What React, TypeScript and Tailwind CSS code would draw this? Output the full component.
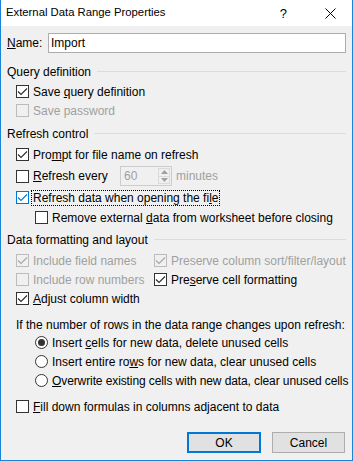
import React from 'react';

type BoxProps = {
  checked?: boolean;
  disabled?: boolean;
  focus?: boolean;
};

function Box({ checked, disabled, focus }: BoxProps) {
  const border = disabled ? 'border-[#bcbcbc]' : focus ? 'border-[#0078d7]' : 'border-[#333333]';
  const bg = disabled ? 'bg-transparent' : 'bg-white';
  const stroke = disabled ? '#a6a6a6' : focus ? '#0078d7' : '#2b2b2b';
  return (
    <span className={`w-[13px] h-[13px] border ${border} ${bg} flex items-center justify-center shrink-0`}>
      {checked && (
        <svg width="11" height="11" viewBox="0 0 11 11">
          <path d="M1 5.5 L4 8.5 L10 2.5" stroke={stroke} strokeWidth="1.1" fill="none" />
        </svg>
      )}
    </span>
  );
}

function Radio({ checked }: { checked?: boolean }) {
  return (
    <span className="w-[13px] h-[13px] rounded-full border border-[#333333] bg-white flex items-center justify-center shrink-0">
      {checked && <span className="w-[7px] h-[7px] rounded-full bg-[#333333]" />}
    </span>
  );
}

function Header({ children, className }: { children: React.ReactNode; className: string }) {
  return (
    <div className={`flex items-center h-[19px] gap-[6px] ${className}`}>
      <span>{children}</span>
      <div className="flex-1 h-px bg-[#dcdcdc]" />
    </div>
  );
}

export default function App() {
  return (
    <div className="w-[353px] h-[461px] flex flex-col border border-t-0 border-[#1883d7] font-['Liberation_Sans',Arial,sans-serif] text-[12px] text-black leading-none whitespace-nowrap">
      {/* Title bar */}
      <div className="h-[26px] bg-white flex items-center pl-[5px] shrink-0">
        <span className="text-[11.3px]">External Data Range Properties</span>
        <span className="ml-auto mr-[38px] text-[13px]">?</span>
        <svg className="mr-[16px]" width="11" height="11" viewBox="0 0 11 11">
          <path d="M0.5 0.5 L10.5 10.5 M10.5 0.5 L0.5 10.5" stroke="#000" strokeWidth="1" />
        </svg>
      </div>

      {/* Body */}
      <div className="flex-1 bg-[#f0f0f0] px-[6px] pt-[7px] flex flex-col">
        {/* Name */}
        <div className="flex items-center h-[20px]">
          <span className="w-[41px]">
            <span className="underline">N</span>ame:
          </span>
          <div className="flex-1 h-[20px] bg-white border border-[#adadad] flex items-center pl-[2px]">Import</div>
        </div>

        <Header className="mt-[9px]">Query definition</Header>
        <div className="flex items-center h-[19px] mt-[1px] ml-[9px] gap-[4px]">
          <Box checked />
          <span>
            Save <span className="underline">q</span>uery definition
          </span>
        </div>
        <div className="flex items-center h-[19px] ml-[9px] gap-[4px] text-[#a0a0a0]">
          <Box disabled />
          <span>Save password</span>
        </div>

        <Header className="mt-[4px]">Refresh control</Header>
        <div className="flex items-center h-[19px] mt-[2px] ml-[9px] gap-[4px]">
          <Box checked />
          <span>
            Pro<span className="underline">m</span>pt for file name on refresh
          </span>
        </div>
        <div className="flex items-center h-[20px] mt-[2px] ml-[9px] gap-[4px]">
          <Box />
          <span className="w-[83px]">
            <span className="underline">R</span>efresh every
          </span>
          <div className="w-[52px] h-[20px] border border-[#cccccc] flex items-stretch">
            <span className="flex-1 flex items-center pl-[3px] text-[#a0a0a0]">60</span>
            <div className="w-[12px] my-[1px] mr-[1px] flex flex-col border border-[#dadada]">
              <div className="flex-1 flex items-center justify-center border-b border-[#dadada]">
                <svg width="7" height="4" viewBox="0 0 7 4">
                  <path d="M0 4 L3.5 0 L7 4 Z" fill="#a0a0a0" />
                </svg>
              </div>
              <div className="flex-1 flex items-center justify-center">
                <svg width="7" height="4" viewBox="0 0 7 4">
                  <path d="M0 0 L3.5 4 L7 0 Z" fill="#a0a0a0" />
                </svg>
              </div>
            </div>
          </div>
          <span className="text-[#a0a0a0]">minutes</span>
        </div>
        <div className="flex items-center h-[19px] mt-[2px] ml-[9px] gap-[2px]">
          <Box checked focus />
          <span className="h-[16px] flex items-center border border-dotted border-black px-[1px]">
            Refresh data when opening the fi<span className="underline">l</span>e
          </span>
        </div>
        <div className="flex items-center h-[19px] mt-[1px] ml-[28px] gap-[4px]">
          <Box />
          <span>
            Remove external <span className="underline">d</span>ata from worksheet before closing
          </span>
        </div>

        <Header className="mt-[3px]">Data formatting and layout</Header>
        <div className="grid grid-cols-[138px_1fr] mt-[2px] ml-[9px]">
          <div className="flex items-center h-[19px] gap-[4px] text-[#a0a0a0]">
            <Box checked disabled />
            <span>Include field names</span>
          </div>
          <div className="flex items-center h-[19px] gap-[4px] text-[#a0a0a0]">
            <Box checked disabled />
            <span>Preserve column sort/filter/layout</span>
          </div>
          <div className="flex items-center h-[19px] gap-[4px] text-[#a0a0a0]">
            <Box disabled />
            <span>Include row numbers</span>
          </div>
          <div className="flex items-center h-[19px] gap-[4px]">
            <Box checked />
            <span>
              Pre<span className="underline">s</span>erve cell formatting
            </span>
          </div>
          <div className="flex items-center h-[19px] gap-[4px]">
            <Box checked />
            <span>
              <span className="underline">A</span>djust column width
            </span>
          </div>
        </div>

        <div className="flex items-center h-[17px] mt-[8px] ml-[9px]">
          If the number of rows in the data range changes upon refresh:
        </div>
        <div className="flex items-center h-[19px] ml-[28px] gap-[4px]">
          <Radio checked />
          <span>
            Insert <span className="underline">c</span>ells for new data, delete unused cells
          </span>
        </div>
        <div className="flex items-center h-[19px] ml-[28px] gap-[4px]">
          <Radio />
          <span>
            Insert entire ro<span className="underline">w</span>s for new data, clear unused cells
          </span>
        </div>
        <div className="flex items-center h-[19px] ml-[28px] gap-[4px]">
          <Radio />
          <span className="tracking-[-0.1px]">
            <span className="underline">O</span>verwrite existing cells with new data, clear unused cells
          </span>
        </div>

        <div className="flex items-center h-[19px] mt-[7px] ml-[9px] gap-[4px]">
          <Box />
          <span>
            <span className="underline">F</span>ill down formulas in columns adjacent to data
          </span>
        </div>

        {/* Buttons */}
        <div className="flex justify-end gap-[11px] mt-[16px] mr-[1px]">
          <button className="w-[74px] h-[21px] bg-[#e1e1e1] border-2 border-[#0078d7] flex items-center justify-center">
            OK
          </button>
          <button className="w-[73px] h-[21px] bg-[#e1e1e1] border border-[#adadad] flex items-center justify-center">
            Cancel
          </button>
        </div>
      </div>
    </div>
  );
}
